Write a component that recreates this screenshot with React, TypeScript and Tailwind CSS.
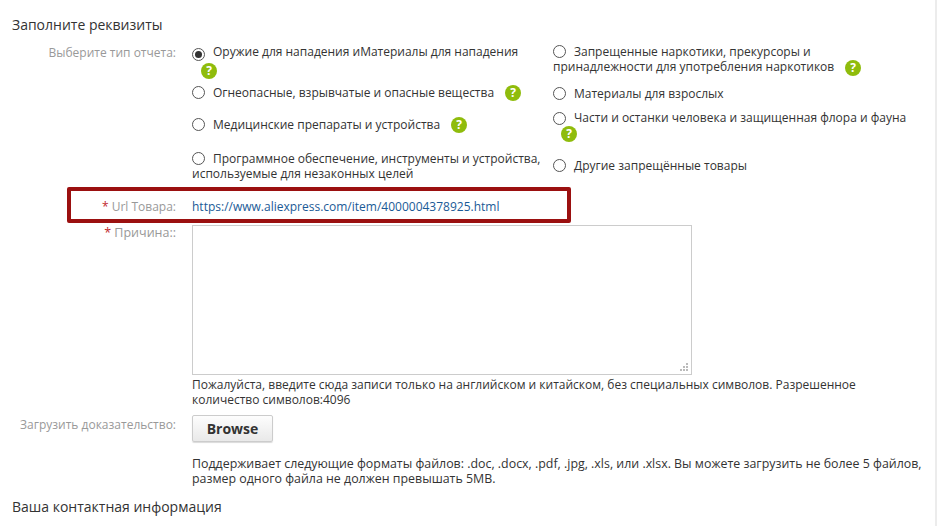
const font = { fontFamily: '"Open Sans", sans-serif' };

function Help({ className = "" }: { className?: string }) {
  return (
    <span className={"inline-flex h-4 w-4 items-center justify-center rounded-full bg-[#8fbc0c] text-[12px] font-bold leading-none text-white align-middle " + className}>?</span>
  );
}

function Radio({ checked = false, className = "" }: { checked?: boolean; className?: string }) {
  return (
    <span className={"inline-flex h-[13px] w-[13px] items-center justify-center rounded-full border border-[#555] bg-white align-[-2px] " + className}>
      {checked && <span className="h-[7px] w-[7px] rounded-full bg-[#333]" />}
    </span>
  );
}

function Grip() {
  return (
    <svg className="absolute bottom-[3px] right-[3px]" width="9" height="9" viewBox="0 0 9 9" fill="#bbb">
      <rect x="6" y="0" width="2" height="2" />
      <rect x="3" y="3" width="2" height="2" />
      <rect x="6" y="3" width="2" height="2" />
      <rect x="0" y="6" width="2" height="2" />
      <rect x="3" y="6" width="2" height="2" />
      <rect x="6" y="6" width="2" height="2" />
    </svg>
  );
}

export default function App() {
  return (
    <div className="h-[526px] w-[937px] overflow-hidden border-r-2 border-[#ececec] bg-white text-[12px] leading-[15px] text-[#333]" style={font}>
      <h2 className="pl-3 pt-[15px] text-[14px] leading-[19px] text-[#333]">Заполните реквизиты</h2>

      <div className="mt-[10px] flex">
        <div className="w-[176px] pt-[1px] text-right text-[#999]">Выберите тип отчета:</div>
        <div className="ml-4 w-[350px]">
          <div className="h-[33px]">
            <Radio checked /><span className="ml-[8px]">Оружие для нападения иМатериалы для нападения</span>
            <div className="ml-[9px] mt-[1px]"><Help /></div>
          </div>
          <div className="mt-[6px] flex h-[19px] items-center">
            <Radio /><span className="ml-[8px]">Огнеопасные, взрывчатые и опасные вещества</span><Help className="ml-[11px]" />
          </div>
          <div className="mt-[13px] flex h-[19px] items-center">
            <Radio /><span className="ml-[8px]">Медицинские препараты и устройства</span><Help className="ml-[11px]" />
          </div>
          <div className="mt-[17px] w-[352px]">
            <Radio /><span className="ml-[8px]">Программное обеспечение, инструменты и устройства, используемые для незаконных целей</span>
          </div>
        </div>
        <div className="ml-[11px] w-[360px]">
          <div>
            <Radio /><span className="ml-[8px]">Запрещенные наркотики, прекурсоры и</span>
            <div>принадлежности для употребления наркотиков<Help className="ml-[11px]" /></div>
          </div>
          <div className="mt-[10px]"><Radio /><span className="ml-[8px]">Материалы для взрослых</span></div>
          <div className="mt-[9px] h-[33px]">
            <Radio className="translate-y-[1px]" /><span className="ml-[8px]">Части и останки человека и защищенная флора и фауна</span>
            <div className="ml-2"><Help /></div>
          </div>
          <div className="mt-[15px]"><Radio /><span className="ml-[8px]">Другие запрещённые товары</span></div>
        </div>
      </div>

      <div className="ml-[67px] mt-[6px] flex h-[36px] w-[504px] items-center rounded-[2px] border-[4px] border-[#9b1010] pt-[2px]">
        <div className="w-[105px] text-right text-[#999]"><span className="text-[#c1272d]">* </span>Url Товара:</div>
        <a className="ml-4 text-[#1a5a96]">https://www.aliexpress.com/item/4000004378925.html</a>
      </div>

      <div className="mt-[2px] flex">
        <div className="w-[176px] text-right text-[12.5px] text-[#999]"><span className="text-[#c1272d]">* </span>Причина::</div>
        <div className="ml-4 w-[735px]">
          <div className="relative h-[150px] w-[500px]">
            <textarea className="block h-full w-full resize-none border border-[#ccc] bg-white outline-none" />
            <Grip />
          </div>
          <p className="mt-[2px] w-[680px] leading-[15px]">Пожалуйста, введите сюда записи только на английском и китайском, без специальных символов. Разрешенное количество символов:4096</p>
        </div>
      </div>

      <div className="mt-[8px] flex">
        <div className="w-[176px] pt-[2px] text-right text-[#999]">Загрузить доказательство:</div>
        <div className="ml-4 w-[735px]">
          <button className="h-[27px] w-[81px] rounded-[2px] border border-[#ccc] bg-gradient-to-b from-[#fdfdfd] to-[#e9e9e9] text-[14px] font-bold text-[#333] shadow-[0_1px_1px_rgba(0,0,0,0.15)]">Browse</button>
          <p className="mt-[14px] text-[12.4px] leading-[15px]">Поддерживает следующие форматы файлов: .doc, .docx, .pdf, .jpg, .xls, или .xlsx. Вы можете загрузить не более 5 файлов, размер одного файла не должен превышать 5MB.</p>
        </div>
      </div>

      <h2 className="pl-3 pt-[11px] text-[14px] leading-[19px] text-[#333]">Ваша контактная информация</h2>
    </div>
  );
}
